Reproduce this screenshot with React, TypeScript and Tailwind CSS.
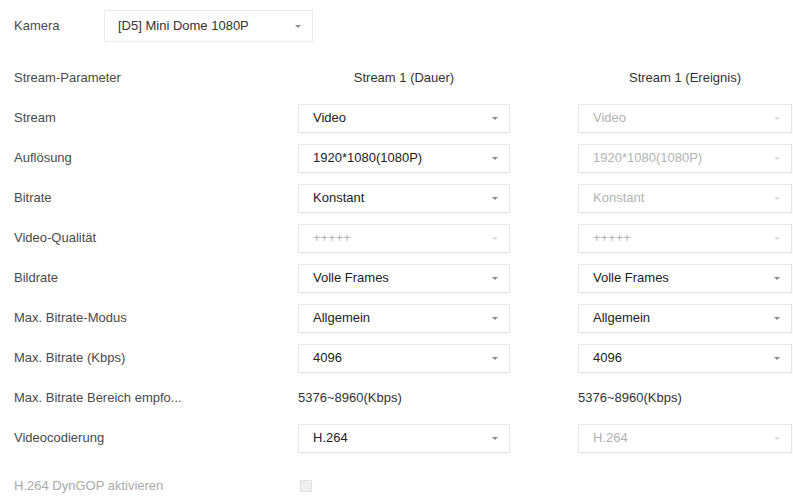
import React from "react";

type Cell =
  | { kind: "select"; value: string; disabled?: boolean }
  | { kind: "text"; value: string };

type Row = { label: string; a: Cell; b: Cell };

const rows: Row[] = [
  { label: "Stream", a: { kind: "select", value: "Video" }, b: { kind: "select", value: "Video", disabled: true } },
  { label: "Auflösung", a: { kind: "select", value: "1920*1080(1080P)" }, b: { kind: "select", value: "1920*1080(1080P)", disabled: true } },
  { label: "Bitrate", a: { kind: "select", value: "Konstant" }, b: { kind: "select", value: "Konstant", disabled: true } },
  { label: "Video-Qualität", a: { kind: "select", value: "+++++", disabled: true }, b: { kind: "select", value: "+++++", disabled: true } },
  { label: "Bildrate", a: { kind: "select", value: "Volle Frames" }, b: { kind: "select", value: "Volle Frames" } },
  { label: "Max. Bitrate-Modus", a: { kind: "select", value: "Allgemein" }, b: { kind: "select", value: "Allgemein" } },
  { label: "Max. Bitrate (Kbps)", a: { kind: "select", value: "4096" }, b: { kind: "select", value: "4096" } },
  { label: "Max. Bitrate Bereich empfo...", a: { kind: "text", value: "5376~8960(Kbps)" }, b: { kind: "text", value: "5376~8960(Kbps)" } },
  { label: "Videocodierung", a: { kind: "select", value: "H.264" }, b: { kind: "select", value: "H.264", disabled: true } },
];

const Arrow = ({ disabled }: { disabled?: boolean }) => (
  <span
    className={`inline-block w-0 h-0 border-l-[3px] border-r-[3px] border-t-[3px] border-l-transparent border-r-transparent ${
      disabled ? "border-t-[#dcdcdc]" : "border-t-[#8a8a8a]"
    }`}
  />
);

const Select = ({ value, disabled }: { value: string; disabled?: boolean }) => (
  <div className="h-[29px] flex items-center justify-between pl-[14px] pr-[11px] bg-white border border-[#e6e6e6] shadow-[0_1px_2px_rgba(0,0,0,0.05)]">
    <span className={disabled ? "text-[#b3b3b3]" : "text-[#222]"}>{value}</span>
    <Arrow disabled={disabled} />
  </div>
);

const CellView = ({ cell }: { cell: Cell }) => {
  if (cell.kind === "text") {
    return <div className="text-[#333]">{cell.value}</div>;
  }
  return <Select value={cell.value} disabled={cell.disabled} />;
};

const App = () => {
  return (
    <div className="w-[793px] h-[501px] bg-white overflow-hidden pl-[14px] pt-[10px] text-[13px] font-['Liberation_Sans',Arial,sans-serif] text-[#4a4a4a]">
      {/* Kamera */}
      <div className="flex items-center h-[32px]">
        <div className="w-[90px]">Kamera</div>
        <div className="w-[209px] h-[32px] flex items-center justify-between pl-[13px] pr-[11px] border border-[#ececec] text-[#333]">
          <span>[D5] Mini Dome 1080P</span>
          <Arrow />
        </div>
      </div>

      <div className="mt-[16px] grid grid-cols-[216px_212px_214px] gap-x-[68px]">
        {/* header */}
        <div className="h-[40px] flex items-center">Stream-Parameter</div>
        <div className="h-[40px] flex items-center justify-center text-[#333]">Stream 1 (Dauer)</div>
        <div className="h-[40px] flex items-center justify-center text-[#333]">Stream 1 (Ereignis)</div>

        {rows.map((r) => (
          <React.Fragment key={r.label}>
            <div className="h-[40px] flex items-center">{r.label}</div>
            <div className="h-[40px] flex flex-col justify-center">
              <CellView cell={r.a} />
            </div>
            <div className="h-[40px] flex flex-col justify-center">
              <CellView cell={r.b} />
            </div>
          </React.Fragment>
        ))}

        <div className="h-[40px] mt-[8px] flex items-center text-[#aaa]">H.264 DynGOP aktivieren</div>
        <div className="h-[40px] mt-[8px] flex items-center pl-[2px]">
          <span className="w-[12px] h-[12px] bg-[#f0f0f0] border border-[#e2e2e2]" />
        </div>
        <div />
      </div>
    </div>
  );
};

export default App;
